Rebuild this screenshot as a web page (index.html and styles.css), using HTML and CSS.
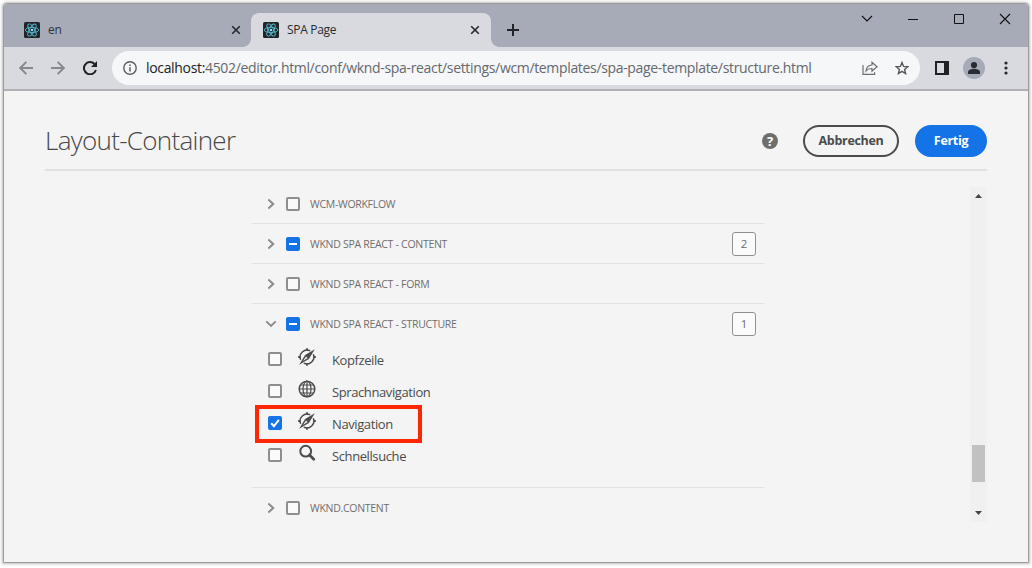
FILE: index.html
```html
<!DOCTYPE html>
<html lang="de">
<head>
<meta charset="utf-8">
<title>SPA Page</title>
<link rel="stylesheet" href="styles.css">
</head>
<body>
<svg class="defs" width="0" height="0">
  <symbol id="react" viewBox="0 0 16 16">
    <rect width="16" height="16" rx="1.5" fill="#202528"/>
    <g fill="none" stroke="#58b9d0" stroke-width=".9">
      <ellipse cx="8" cy="8" rx="6.8" ry="2.6"/>
      <ellipse cx="8" cy="8" rx="6.8" ry="2.6" transform="rotate(60 8 8)"/>
      <ellipse cx="8" cy="8" rx="6.8" ry="2.6" transform="rotate(120 8 8)"/>
    </g>
    <circle cx="8" cy="8" r="1.3" fill="#8be6fa"/>
  </symbol>
  <symbol id="close" viewBox="0 0 10 10"><path d="M1.2 1.2l7.6 7.6M8.8 1.2L1.2 8.8" fill="none" stroke="#25282c" stroke-width="1.6"/></symbol>
  <symbol id="right" viewBox="0 0 8 12"><path d="M1.4 1.5L6.2 6 1.4 10.5" fill="none" stroke="#8b8b8b" stroke-width="2"/></symbol>
  <symbol id="down" viewBox="0 0 12 8"><path d="M1.3 1.4L6 5.9l4.7-4.5" fill="none" stroke="#8b8b8b" stroke-width="2"/></symbol>
  <symbol id="compass" viewBox="0 0 18 18">
    <path d="M12.2 2.9A6.9 6.9 0 0 0 2.7 11.8M5.8 15.1A6.9 6.9 0 0 0 15.3 6.2" fill="none" stroke="#4b4b4b" stroke-width="1.5"/>
    <path d="M9 .2v2.3M9 15.5v2.3M.2 9h2.3M15.5 9h2.3" stroke="#4b4b4b" stroke-width="1.8"/>
    <path d="M16.8 1.2L10.9 10.9 1.2 16.8 7.1 7.1z" fill="#4b4b4b"/>
    <path d="M8 8.4L9.6 10 5 13z" fill="#f4f4f4"/>
  </symbol>
</svg>
<main class="window">
  <header class="tabs">
    <div class="tab tab-en"><svg class="fav"><use href="#react"/></svg><span>en</span><svg class="x"><use href="#close"/></svg></div>
    <div class="tab tab-active"><svg class="fav"><use href="#react"/></svg><span class="tab-name">SPA Page</span><svg class="x"><use href="#close"/></svg></div>
    <svg class="plus" viewBox="0 0 12 12"><path d="M6 0v12M0 6h12" stroke="#202327" stroke-width="2"/></svg>
    <div class="controls">
      <svg viewBox="0 0 12 12"><path d="M1 3l5 5 5-5" fill="none" stroke="#111" stroke-width="1.1"/></svg>
      <svg viewBox="0 0 12 12"><path d="M1 6.5h10" stroke="#111"/></svg>
      <svg viewBox="0 0 12 12"><path d="M1.5 1.5h9v9h-9z" fill="none" stroke="#111"/></svg>
      <svg viewBox="0 0 12 12"><path d="M1 1l10 10M11 1L1 11" stroke="#111" stroke-width="1.1"/></svg>
    </div>
  </header>
  <nav class="toolbar">
    <svg class="arrow" viewBox="0 0 14 14"><path d="M14 7H1.5M7.4 .8L1.2 7l6.2 6.2" fill="none" stroke="#85888d" stroke-width="1.9"/></svg>
    <svg class="arrow" viewBox="0 0 14 14"><path d="M0 7h12.5M6.6 .8L12.8 7l-6.2 6.2" fill="none" stroke="#85888d" stroke-width="1.9"/></svg>
    <svg class="reload" viewBox="0 0 14 14"><path d="M12.9 9A6.1 6.1 0 1 1 11.5 3" fill="none" stroke="#1f2124" stroke-width="2"/><path d="M14 0v6H8z" fill="#1f2124"/></svg>
    <div class="address">
      <svg class="info" viewBox="0 0 14 14"><circle cx="7" cy="7" r="6.2" fill="none" stroke="#5b5e63" stroke-width="1.4"/><path d="M7 6.2v4.3M7 3.4v1.7" stroke="#5b5e63" stroke-width="1.5"/></svg>
      <span class="url"><b>localhost:</b>4502/editor.html/conf/wknd-spa-react/settings/wcm/templates/spa-page-template/structure.html</span>
      <svg class="share" viewBox="0 0 16 14"><path d="M1 4v9.3h11.6v-2.1" fill="none" stroke="#6b6e73" stroke-width="1.2"/><path d="M4 10c.4-3.8 2.4-5.8 6-6V1.3L15 5.8l-5 4.4V7.5C7.3 7.4 5.5 8 4 10z" fill="none" stroke="#6b6e73" stroke-width="1.2"/></svg>
      <svg class="star" viewBox="0 0 14 14"><path d="M7 1.5l1.6 3.9 4.2.3-3.2 2.7 1 4.1L7 10.3l-3.6 2.2 1-4.1-3.2-2.7 4.2-.3z" fill="none" stroke="#54575b" stroke-width="1.4"/></svg>
    </div>
    <svg class="panel" viewBox="0 0 14 14"><path d="M1 1h12v12H1z" fill="none" stroke="#202124" stroke-width="2"/><path d="M9 0h5v14H9z" fill="#202124"/></svg>
    <svg class="avatar" viewBox="0 0 22 22"><circle cx="11" cy="11" r="11" fill="#a6aab6"/><circle cx="11" cy="8" r="3.1" fill="#282b32"/><path d="M5 17v-2c0-2.5 4-3.3 6-3.3s6 .8 6 3.3v2z" fill="#282b32"/></svg>
    <svg class="dots" viewBox="0 0 4 14"><g fill="#25282c"><circle cx="2" cy="2" r="1.6"/><circle cx="2" cy="7" r="1.6"/><circle cx="2" cy="12" r="1.6"/></g></svg>
  </nav>
  <section class="page">
    <div class="head">
      <h1>Layout-Container</h1>
      <span class="help">?</span>
      <button class="btn cancel">Abbrechen</button>
      <button class="btn done">Fertig</button>
    </div>
    <div class="body">
      <div class="list">
        <div class="row"><svg class="chev"><use href="#right"/></svg><i class="box"></i><span>WCM-WORKFLOW</span></div>
        <div class="row"><svg class="chev"><use href="#right"/></svg><i class="box mixed"></i><span>WKND SPA REACT - CONTENT</span><em class="count">2</em></div>
        <div class="row"><svg class="chev"><use href="#right"/></svg><i class="box"></i><span>WKND SPA REACT - FORM</span></div>
        <div class="row open"><svg class="chev-down"><use href="#down"/></svg><i class="box mixed"></i><span>WKND SPA REACT - STRUCTURE</span><em class="count">1</em></div>
        <div class="items">
          <div class="item"><i class="box"></i><svg class="icon"><use href="#compass"/></svg><span>Kopfzeile</span></div>
          <div class="item"><i class="box"></i><svg class="icon" viewBox="0 0 18 18"><g fill="none" stroke="#4b4b4b" stroke-width="1.2"><circle cx="9" cy="9" r="7.8" stroke-width="1.5"/><ellipse cx="9" cy="9" rx="4" ry="7.8"/><path d="M9 1v16M1 9h16M2.3 5h13.4M2.3 13h13.4"/></g></svg><span>Sprachnavigation</span></div>
          <div class="item marked"><i class="box checked"><svg viewBox="0 0 14 14"><path d="M3.2 7.2l2.7 2.9 5-6.2" fill="none" stroke="#fff" stroke-width="2"/></svg></i><svg class="icon"><use href="#compass"/></svg><span>Navigation</span></div>
          <div class="item"><i class="box"></i><svg class="icon" viewBox="0 0 18 18"><circle cx="7.7" cy="7.2" r="5.4" fill="none" stroke="#4b4b4b" stroke-width="2"/><path d="M11.5 11l4.3 4.3" stroke="#4b4b4b" stroke-width="2.7" stroke-linecap="round"/></svg><span>Schnellsuche</span></div>
        </div>
        <div class="row last"><svg class="chev"><use href="#right"/></svg><i class="box"></i><span>WKND.CONTENT</span></div>
      </div>
      <div class="scroll">
        <svg viewBox="0 0 7 4"><path d="M0 4L3.5 0 7 4z" fill="#454545"/></svg>
        <div class="thumb"></div>
        <svg viewBox="0 0 7 4"><path d="M0 0L3.5 4 7 0z" fill="#454545"/></svg>
      </div>
    </div>
  </section>
</main>
</body>
</html>
```
FILE: styles.css
```css
*, *::before, *::after { box-sizing: border-box; }
body { margin: 0; padding: 3px; height: 568px; overflow: hidden; background: #fff; font-family: "Open Sans", sans-serif; }
svg { display: block; flex: none; }
.defs { position: absolute; }
.window { width: 1026px; height: 560px; border: 1px solid #9b9b9b; border-radius: 4px 4px 0 0; background: #f4f4f4; box-shadow: 0 0 3px 1px #bbb; overflow: hidden; }

.tabs { display: flex; height: 43px; background: #a7abb7; }
.tab { display: flex; align-items: center; height: 34px; margin-top: 9px; font: 12px/16px "Open Sans", sans-serif; letter-spacing: -.2px; color: #303339; }
.tab-en { width: 247px; padding: 0 10px 0 20px; }
.tab-active { position: relative; width: 240px; padding: 0 11px 0 12px; border-radius: 8px 8px 0 0; background: #d9dadf; color: #292b2f; }
.tab-active::before, .tab-active::after { content: ""; position: absolute; bottom: 0; width: 8px; height: 8px; }
.tab-active::before { left: -8px; background: radial-gradient(circle at 0 0, transparent 7.5px, #d9dadf 8px); }
.tab-active::after { right: -8px; background: radial-gradient(circle at 100% 0, transparent 7.5px, #d9dadf 8px); }
.tab .fav { width: 16px; height: 16px; margin-right: 8px; }
.tab .x { width: 10px; height: 10px; margin-left: auto; }
.tab-name { letter-spacing: -.3px; }
.plus { width: 12px; height: 12px; margin: 20px 0 0 16px; }
.controls { display: flex; gap: 34px; margin: 9px 17px 0 auto; }
.controls svg { width: 12px; height: 12px; }

.toolbar { display: flex; align-items: center; height: 44px; padding: 0 20px 1px 15px; background: #d9dadf; border-bottom: 2px solid #b0b1b3; }
.arrow { width: 14px; height: 14px; margin-right: 18px; }
.reload { width: 14px; height: 14px; }
.address { display: flex; align-items: center; width: 808px; height: 34px; margin-left: 15px; padding: 0 11px; border-radius: 17px; background: #f5f7f9; }
.info { width: 14px; height: 14px; margin-right: 9px; }
.url { font: 14px/20px "Open Sans", sans-serif; letter-spacing: -.335px; color: #65686d; white-space: nowrap; }
.url b { font-weight: 400; color: #202124; }
.share { width: 16px; height: 14px; margin-left: auto; }
.star { width: 14px; height: 14px; margin-left: 17px; }
.panel { width: 14px; height: 14px; margin-left: 15px; }
.avatar { width: 22px; height: 22px; margin-left: 14px; }
.dots { width: 4px; height: 14px; margin-left: auto; }

.page { padding: 33px 41px 0; }
.head { display: flex; align-items: center; height: 47px; padding-bottom: 11px; border-bottom: 2px solid #e1e1e1; }
h1 { margin: -3px auto 0 0; font: 300 26px/32px "Open Sans", sans-serif; letter-spacing: -.7px; color: #484848; }
.help { width: 16px; height: 16px; margin-right: 25px; border-radius: 50%; background: #6e6e6e; color: #fff; font: 700 13px/16px "Open Sans", sans-serif; text-align: center; }
.btn { height: 32px; padding: 0 0 1px; border: 2px solid #4b4b4b; border-radius: 16px; background: none; color: #4b4b4b; font: 700 12.5px/20px "Open Sans", sans-serif; letter-spacing: -.32px; }
.cancel { width: 96px; margin-right: 16px; }
.done { width: 72px; border-color: #1473e6; background: #1473e6; color: #fff; }

.body { display: flex; justify-content: space-between; padding-top: 13px; }
.list { width: 512px; margin-left: 207px; }
.row { display: flex; align-items: center; height: 40px; padding: 0 8px 0 15px; border-bottom: 1px solid #e1e1e1; font: 10.5px/14px "Open Sans", sans-serif; letter-spacing: -.29px; color: #6e6e6e; white-space: nowrap; }
.row span { margin-left: 10px; }
.open, .last { border-bottom: 0; }
.chev { width: 8px; height: 12px; margin-right: 11px; }
.chev-down { width: 12px; height: 8px; margin: 0 9px 0 -2px; }
.box { display: block; flex: none; width: 14px; height: 14px; border: 2px solid #8e8e8e; border-radius: 2px; background: #fafafa; }
.mixed { border-color: #1473e6; background: linear-gradient(#fff, #fff) center / 8px 2px no-repeat #1473e6; }
.checked { border: 0; background: #1473e6; }
.count { width: 24px; height: 24px; margin-left: auto; border: 1px solid #909090; border-radius: 3px; background: #fafafa; font: 11.5px/22px "Open Sans", sans-serif; text-align: center; }
.items { height: 145px; margin-top: -1px; border-bottom: 1px solid #e1e1e1; }
.item { display: flex; align-items: center; height: 32px; padding-left: 16px; font: 13px/18px "Open Sans", sans-serif; letter-spacing: -.4px; color: #4b4b4b; }
.item .icon { width: 18px; height: 18px; margin: -4px 16px 0 16px; }
.item span { margin-top: 1px; }
.marked { position: relative; }
.marked::after { content: ""; position: absolute; left: 3px; top: -2px; width: 167px; height: 38px; border: 4px solid #ff2600; }
.scroll { display: flex; flex-direction: column; align-items: center; width: 17px; height: 335px; margin-top: 3px; padding: 7px 1px 7px 0; background: #f0f0f0; }
.scroll svg { width: 7px; height: 4px; }
.thumb { width: 13px; height: 37px; margin: 247px 0 auto; background: #c1c1c1; }
```
